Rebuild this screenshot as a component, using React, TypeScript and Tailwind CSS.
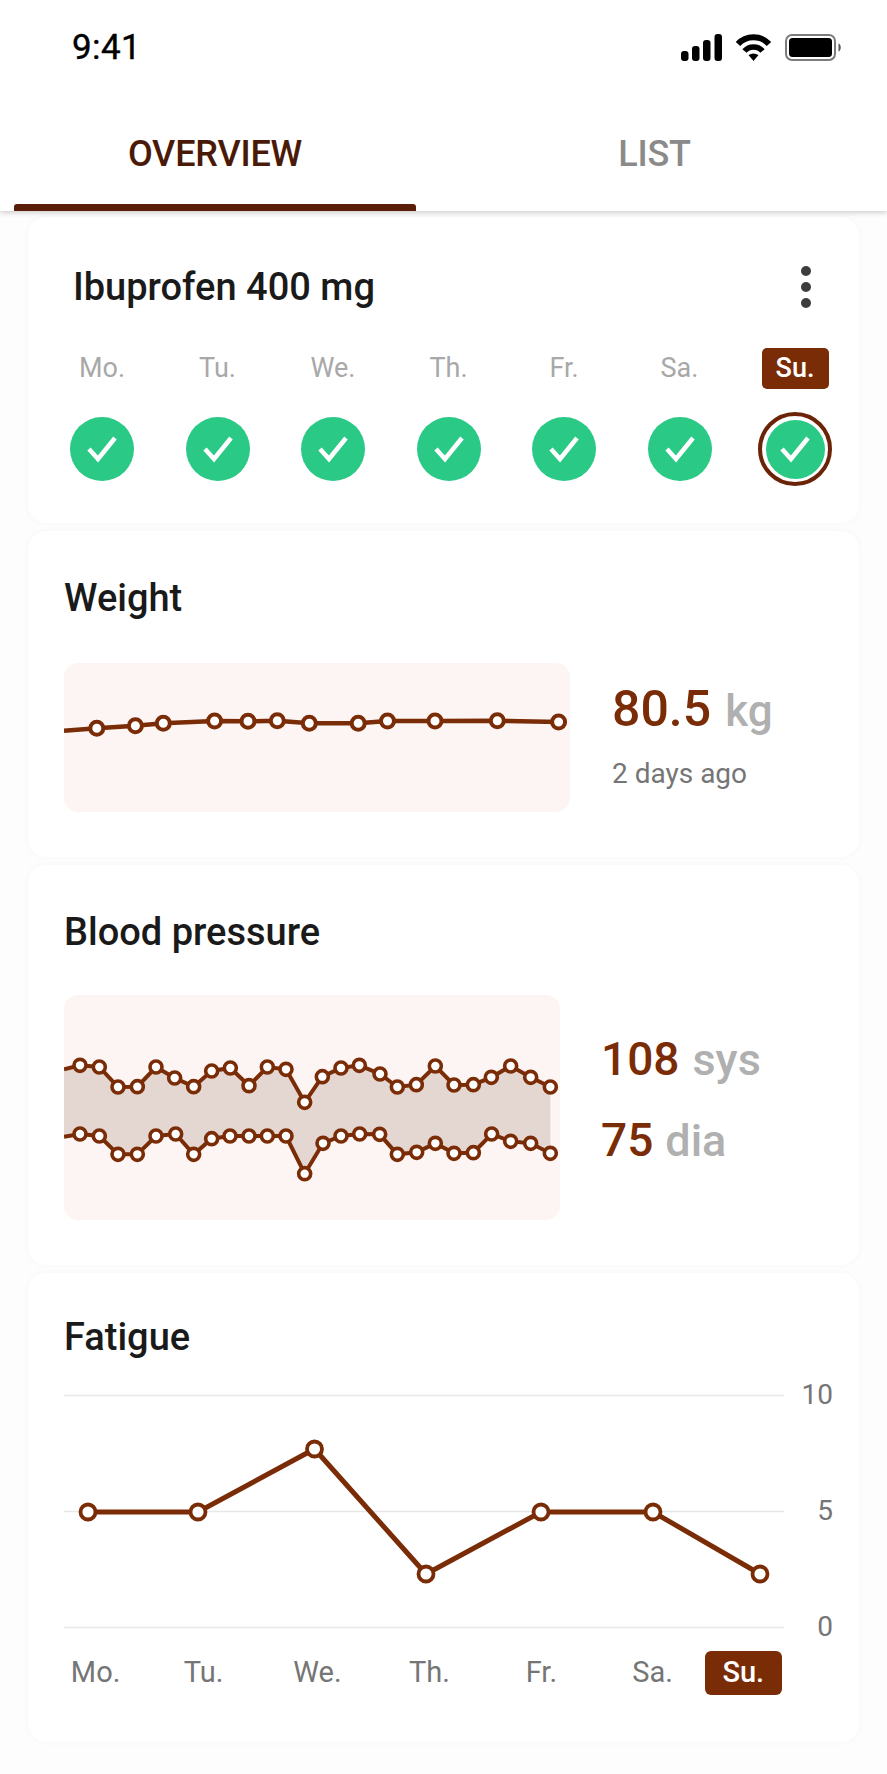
const BROWN = "#7a2c07";

function Dots({ pts, r, sw }: { pts: number[][]; r: number; sw: number }) {
  return (
    <>
      {pts.map(([x, y], i) => (
        <circle key={i} cx={x} cy={y} r={r} fill="#fff" stroke={BROWN} strokeWidth={sw} />
      ))}
    </>
  );
}

const line = (pts: number[][]) => pts.map((p) => p.join(",")).join(" ");

const weight = [
  [0, 67.7], [32.8, 65.3], [71.4, 62.7], [99.3, 60.3], [150.6, 58], [184, 58.3], [213.3, 57.7],
  [245.3, 60.3], [294.2, 60.3], [323.5, 58], [371, 58], [433.3, 57.7], [494.6, 59],
];

const conv = (a: number[][], b: number[][]) => [
  ...a.map(([x, y]) => [x / 3 - 14, y / 3 + 45]),
  ...b.map(([x, y]) => [x / 3 + 236, y / 3 + 45]),
];
const sys = conv(
  [[42, 88], [90, 76], [148, 81], [204, 141], [262, 140], [318, 81], [374, 114], [431, 140], [485, 93], [541, 84], [597, 137], [652, 81], [708, 88], [764, 187]],
  [[67, 110], [123, 84], [178, 76], [240, 102], [292, 141], [349, 134], [406, 78], [462, 135], [520, 134], [574, 112], [632, 78], [692, 112], [751, 141]],
);
const dia = conv(
  [[42, 290], [90, 282], [148, 288], [204, 343], [262, 343], [318, 288], [377, 282], [431, 343], [485, 296], [540, 288], [597, 288], [652, 288], [708, 288], [764, 401]],
  [[69, 310], [123, 288], [179, 282], [239, 283], [292, 343], [350, 337], [406, 310], [462, 340], [520, 338], [575, 282], [632, 304], [692, 310], [751, 340]],
);
const band = [...sys, ...[...dia].reverse()];

const fatigue = [
  [24, 117], [134, 117], [250.5, 54], [362, 179], [477, 117], [589, 117], [696, 179],
];

function Check() {
  return (
    <svg width="36" height="30" viewBox="0 0 36 30" fill="none">
      <path d="M5 15 L14 25 L31 4" stroke="#fff" strokeWidth="4.5" />
    </svg>
  );
}

function Card({ className, children }: { className: string; children: React.ReactNode }) {
  return (
    <div className={`rounded-[18px] bg-white shadow-[0_0_6px_rgba(0,0,0,0.035)] ${className}`}>{children}</div>
  );
}

const days = ["Mo.", "Tu.", "We.", "Th.", "Fr.", "Sa.", "Su."];

export default function App() {
  return (
    <div
      className="w-[887px] h-[1774px] overflow-hidden bg-[#fdfdfd] flex flex-col text-[#1a1a1a]"
      style={{ fontFamily: "Roboto, sans-serif" }}
    >
      <header className="relative z-10 h-[211px] shrink-0 bg-white shadow-[0_2px_5px_rgba(0,0,0,0.18)]">
        <div className="h-[94px] flex items-start justify-between pl-[72px] pr-[45px] pt-[27px]">
          <span className="text-[35px] leading-[42px] text-black font-normal tracking-[0.4px] [-webkit-text-stroke:0.4px_#000]">9:41</span>
          <div className="flex items-center gap-[13px] pt-[6px]">
            <svg width="41" height="27" viewBox="0 0 41 27">
              <rect x="0" y="17" width="7.5" height="10" rx="3" />
              <rect x="11" y="12" width="7.5" height="15" rx="3" />
              <rect x="22" y="6" width="7.5" height="21" rx="3" />
              <rect x="33.5" y="0" width="7.5" height="27" rx="3" />
            </svg>
            <svg width="37" height="28" viewBox="0 0 37 28" fill="none" stroke="#000">
              <path d="M3 11 C 11 2, 26 2, 34 11" strokeWidth="6" />
              <path d="M9.5 18 C 14 12.5, 23 12.5, 27.5 18" strokeWidth="5.5" />
              <path d="M13.5 22 Q 18.5 19 23.5 22 L18.5 28 Z" fill="#000" stroke="none" />
            </svg>
            <svg width="57" height="27" viewBox="0 0 57 27">
              <rect x="1" y="1" width="49" height="25" rx="6" fill="none" stroke="#7c7c7c" strokeWidth="2" />
              <rect x="4" y="4" width="43" height="19" rx="3.5" fill="#000" />
              <path d="M53.5 9.5 C 56.5 10.5, 56.5 16.5, 53.5 17.5 Z" fill="#555" />
            </svg>
          </div>
        </div>
        <div className="flex h-[117px]">
          <div className="ml-[14px] w-[402px] flex flex-col">
            <div className="flex-1 flex items-center justify-center pt-[10px]">
              <span className="text-[36px] font-medium text-[#4a1a08] tracking-[-0.2px]">OVERVIEW</span>
            </div>
            <div className="h-[7px] bg-[#5a1e08] rounded-t-[3px]" />
          </div>
          <div className="flex-1 flex items-center justify-center pt-[3px] pl-[6px]">
            <span className="text-[36px] font-medium text-[#8a8a8a] tracking-[-0.2px]">LIST</span>
          </div>
        </div>
      </header>

      <main className="flex flex-col gap-[8px] px-[28px] pt-[6px]">
        <Card className="h-[306px] flex flex-col">
          <div className="flex items-center justify-between pl-[45px] pr-[48px] pt-[46px]">
            <h2 className="text-[38px] leading-[48px] font-medium">Ibuprofen 400 mg</h2>
            <div className="flex flex-col gap-[6px]">
              <span className="w-[10px] h-[10px] rounded-full bg-[#3d3d3d]" />
              <span className="w-[10px] h-[10px] rounded-full bg-[#3d3d3d]" />
              <span className="w-[10px] h-[10px] rounded-full bg-[#3d3d3d]" />
            </div>
          </div>
          <div className="grid grid-cols-7 w-[808.5px] ml-[16.25px] mt-[37px]">
            {days.map((d, i) =>
              i === 6 ? (
                <div key={d} className="flex justify-center">
                  <span className="w-[67px] h-[41px] rounded-[5px] bg-[#7a2c07] text-white text-[27px] font-medium flex items-center justify-center">
                    {d}
                  </span>
                </div>
              ) : (
                <div key={d} className="h-[41px] flex items-center justify-center text-[27px] text-[#a8a8a8]">
                  {d}
                </div>
              ),
            )}
          </div>
          <div className="grid grid-cols-7 w-[808.5px] ml-[16.25px] mt-[23px]">
            {days.map((d, i) => (
              <div key={d} className="h-[74px] flex items-center justify-center">
                {i === 6 ? (
                  <div className="w-[74px] h-[74px] rounded-full border-[4px] border-[#6b2408] flex items-center justify-center">
                    <div className="w-[59px] h-[59px] rounded-full bg-[#2bc986] flex items-center justify-center">
                      <Check />
                    </div>
                  </div>
                ) : (
                  <div className="w-[64px] h-[64px] rounded-full bg-[#2bc986] flex items-center justify-center">
                    <Check />
                  </div>
                )}
              </div>
            ))}
          </div>
        </Card>

        <Card className="h-[326px] pl-[36px] pr-[28px] pt-[42px]">
          <h2 className="text-[38px] leading-[50px] font-medium">Weight</h2>
          <div className="flex mt-[40px]">
            <div className="w-[506px] h-[149px] rounded-[14px] bg-[#fdf5f3] overflow-hidden shrink-0">
              <svg width="506" height="149" viewBox="0 0 506 149" className="block">
                <polyline points={line(weight)} fill="none" stroke={BROWN} strokeWidth="4.5" />
                <Dots pts={weight.slice(1)} r={6.5} sw={4} />
              </svg>
            </div>
            <div className="ml-[42px] flex flex-col">
              <div className="mt-[15px] h-[62px] flex items-baseline">
                <span className="text-[50px] leading-[62px] font-medium text-[#7a2c07]">80.5</span>
                <span className="ml-[14px] text-[44px] leading-[62px] font-medium text-[#b0b0b0]">kg</span>
              </div>
              <div className="mt-[14px] text-[28px] leading-[40px] text-[#757575]">2 days ago</div>
            </div>
          </div>
        </Card>

        <Card className="h-[400px] pl-[36px] pr-[28px] pt-[42px]">
          <h2 className="text-[38px] leading-[50px] font-medium">Blood pressure</h2>
          <div className="flex mt-[38px]">
            <div className="w-[496px] h-[225px] rounded-[14px] bg-[#fdf5f3] overflow-hidden shrink-0">
              <svg width="496" height="225" viewBox="0 0 496 225" className="block">
                <polygon points={line(band)} fill="#e4d6d1" />
                <polyline points={line(sys)} fill="none" stroke={BROWN} strokeWidth="4" />
                <polyline points={line(dia)} fill="none" stroke={BROWN} strokeWidth="4" />
                <Dots pts={sys.slice(1)} r={6} sw={3.6} />
                <Dots pts={dia.slice(1)} r={6} sw={3.6} />
              </svg>
            </div>
            <div className="ml-[41px] flex flex-col mt-[36px]">
              <div className="flex items-baseline h-[56px]">
                <span className="text-[46px] leading-[56px] font-medium text-[#7a2c07]">108</span>
                <span className="ml-[13px] text-[45px] leading-[56px] font-medium text-[#b0b0b0]">sys</span>
              </div>
              <div className="flex items-baseline h-[56px] mt-[25px]">
                <span className="text-[46px] leading-[56px] font-medium text-[#7a2c07]">75</span>
                <span className="ml-[12px] text-[45px] leading-[56px] font-medium text-[#b0b0b0]">dia</span>
              </div>
            </div>
          </div>
        </Card>

        <Card className="h-[469px] pl-[36px] pt-[39px]">
          <h2 className="text-[38px] leading-[50px] font-medium">Fatigue</h2>
          <div className="flex mt-[33px]">
            <svg width="720" height="234" viewBox="0 0 720 234" className="block shrink-0 overflow-visible">
              {[0, 116, 232].map((y) => (
                <line key={y} x1="0" x2="720" y1={y + 0.5} y2={y + 0.5} stroke="#e8e8e8" strokeWidth="1.5" />
              ))}
              <polyline points={line(fatigue)} fill="none" stroke={BROWN} strokeWidth="5" />
              <Dots pts={fatigue} r={7.5} sw={3.8} />
            </svg>
            <div className="w-[49px] h-[268px] -mt-[18px] flex flex-col justify-between items-end text-[28px] leading-[36px] text-[#757575]">
              <span>10</span>
              <span>5</span>
              <span>0</span>
            </div>
          </div>
          <div className="-ml-[22.4px] mt-[6px] grid grid-cols-[108px_108px_119.6px_104.4px_119.6px_102.8px_78.6px] items-center text-[29px] text-[#757575]">
            {days.map((d, i) => (
              <div key={d} className="flex justify-center">
                {i === 6 ? (
                  <span className="w-[77px] h-[44px] rounded-[6px] bg-[#7a2c07] text-white font-medium flex items-center justify-center">
                    {d}
                  </span>
                ) : (
                  <span>{d}</span>
                )}
              </div>
            ))}
          </div>
        </Card>
      </main>
    </div>
  );
}
